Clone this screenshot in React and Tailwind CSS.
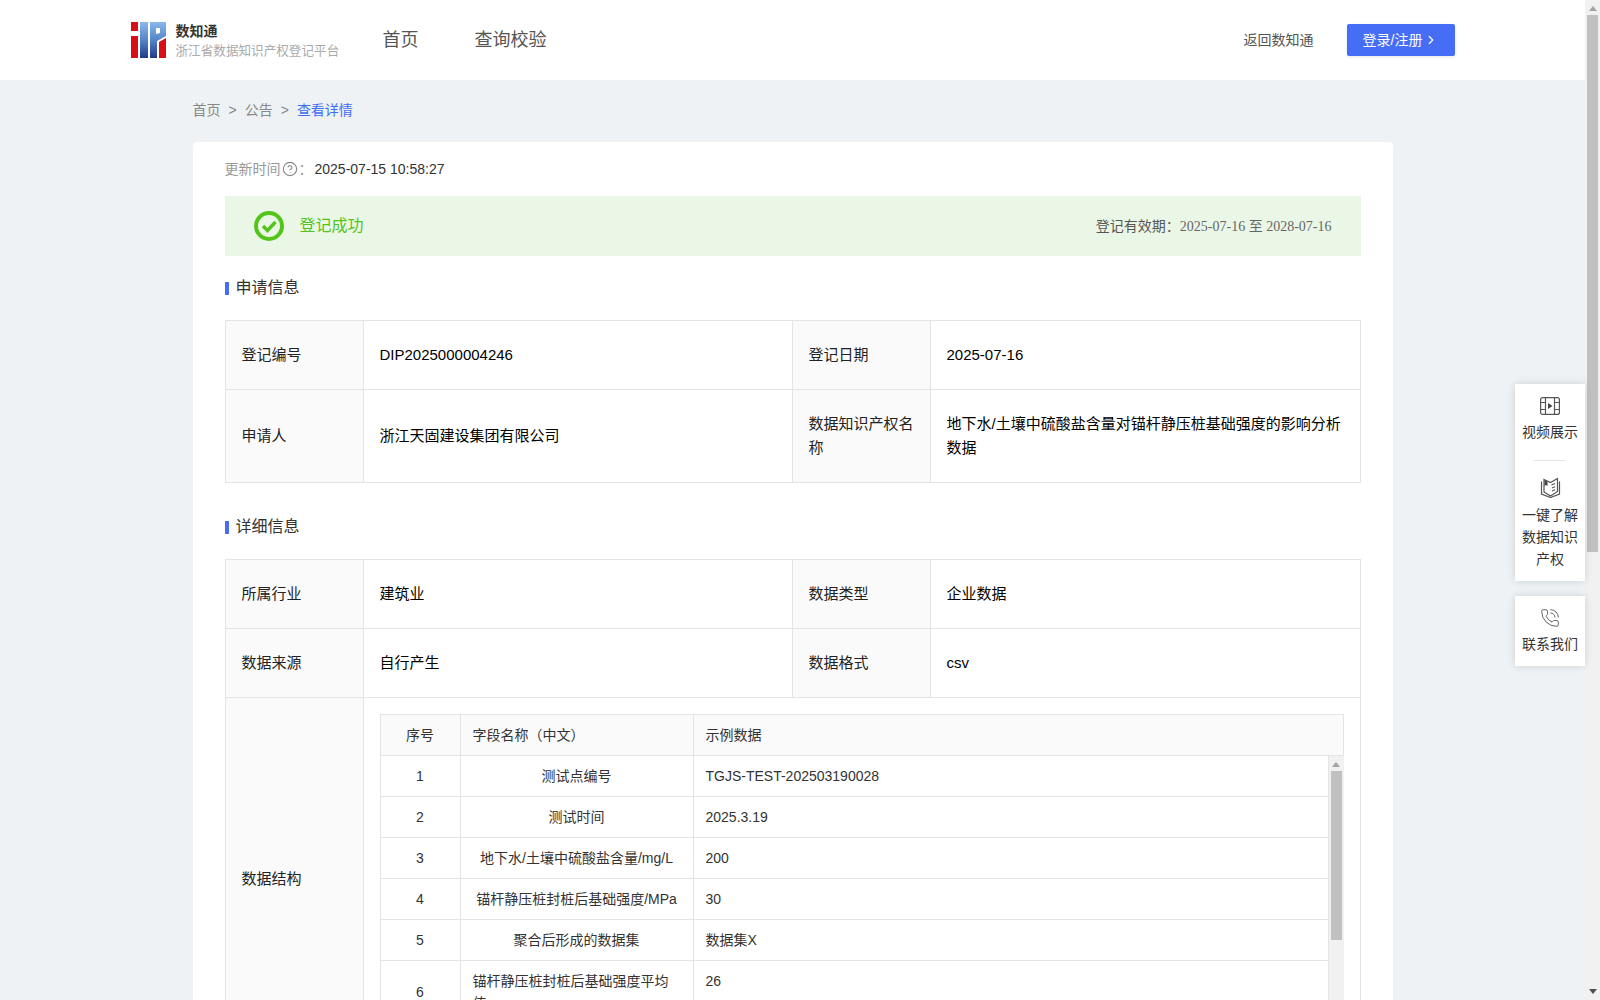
import { ChevronRight, CircleHelp, PhoneCall } from 'lucide-react'

const SANS = "font-['Liberation_Sans','Noto_Sans_CJK_SC',sans-serif]"

function Logo() {
  return (
    <svg width="35" height="36" viewBox="0 0 35 36" className="shrink-0">
      <defs>
        <linearGradient id="logoBlue" x1="0" y1="0" x2="0" y2="1">
          <stop offset="0" stopColor="#8ab8ea" />
          <stop offset="0.5" stopColor="#5585c8" />
          <stop offset="1" stopColor="#1f3a8a" />
        </linearGradient>
      </defs>
      <rect x="0" y="0" width="7" height="9" fill="#d80f16" />
      <rect x="0" y="14" width="7" height="22" fill="#d80f16" />
      <rect x="9" y="0" width="8" height="36" fill="url(#logoBlue)" />
      <path fill="url(#logoBlue)" fillRule="evenodd" d="M19 0h16v14l-9 5v17h-7zM25 6v6l4-1V6z" />
      <path fill="#d80f16" d="M35 16v20h-7V20z" />
    </svg>
  )
}

function FilmIcon() {
  return (
    <svg width="20" height="18" viewBox="0 0 20 18" fill="none" stroke="#555" strokeWidth="1.2">
      <rect x="0.6" y="0.6" width="18.8" height="16.8" rx="2" />
      <path d="M5.5 1v16M14.5 1v16M1 5.5h4.5M1 12.5h4.5M14.5 5.5H19M14.5 12.5H19" />
      <path d="M8 6l4.5 3L8 12z" fill="#444" stroke="none" />
    </svg>
  )
}

function BookIcon() {
  return (
    <svg width="21" height="21" viewBox="0 0 21 21" fill="none" stroke="#555" strokeWidth="1.2">
      <path d="M4 2.5l6.5 3 7-4v13l-7 4.5-6.5-4z" />
      <path d="M1.5 4.5v12.5l9 3.5 9-3.5V4.5" />
      <path d="M4.5 3l3 1.4v4.5l-1.5-1-1.5 1z" fill="#444" stroke="none" />
      <path d="M11.5 8l3.5-1.5M12 11l3-1.2M12 14l3-1.2" />
    </svg>
  )
}

function Heading({ children, className }) {
  return (
    <div className={`flex h-6 items-center gap-[7px] text-base text-[#333] ${className}`}>
      <span className="h-[13px] w-1 bg-[#456DF5]" />
      {children}
    </div>
  )
}

function Label({ children, className = '' }) {
  return <td className={`border border-[#e4e4e4] bg-[#fafafa] px-4 leading-6 ${className}`}>{children}</td>
}

function Value({ children }) {
  return <td className="border border-[#e4e4e4] px-4 leading-6 text-black">{children}</td>
}

function InfoTable({ children }) {
  return (
    <table className="w-[1136px] table-fixed border-collapse text-[15px] text-[#222]">
      <colgroup>
        <col className="w-[138px]" />
        <col className="w-[429px]" />
        <col className="w-[138px]" />
        <col />
      </colgroup>
      <tbody>{children}</tbody>
    </table>
  )
}

const FIELDS = [
  { no: 1, name: '测试点编号', sample: 'TGJS-TEST-202503190028' },
  { no: 2, name: '测试时间', sample: '2025.3.19' },
  { no: 3, name: '地下水/土壤中硫酸盐含量/mg/L', sample: '200' },
  { no: 4, name: '锚杆静压桩封桩后基础强度/MPa', sample: '30' },
  { no: 5, name: '聚合后形成的数据集', sample: '数据集X' },
  { no: 6, name: '锚杆静压桩封桩后基础强度平均值', sample: '26', wrap: true },
]

function FieldsTable() {
  return (
    <div className="w-[964px] text-sm text-[#333]">
      <div className="flex h-[42px] border border-[#e4e4e4] bg-[#fafafa] leading-[40px]">
        <div className="w-[80px] border-r border-[#e4e4e4] text-center">序号</div>
        <div className="w-[233px] border-r border-[#e4e4e4] px-3">字段名称（中文）</div>
        <div className="flex-1 px-3">示例数据</div>
      </div>
      <div className="flex h-[288px] overflow-hidden">
        <div className="w-[949px] shrink-0">
          {FIELDS.map((f) => (
            <div key={f.no} className="flex border-b border-l border-[#e4e4e4]">
              <div className="flex w-[80px] items-center justify-center border-r border-[#e4e4e4] py-[9px] leading-[22px]">{f.no}</div>
              <div className={`w-[233px] border-r border-[#e4e4e4] px-3 py-[9px] leading-[22px] ${f.wrap ? 'text-left' : 'text-center'}`}>{f.name}</div>
              <div className="flex-1 border-r border-[#e4e4e4] px-3 py-[9px] leading-[22px]">{f.sample}</div>
            </div>
          ))}
        </div>
        <div className="flex w-[15px] flex-col items-center bg-[#f1f1f1] pt-[6px]">
          <svg width="8" height="5" viewBox="0 0 8 5"><path d="M4 0l4 5H0z" fill="#a3a3a3" /></svg>
          <div className="mt-1 h-[169px] w-[11px] bg-[#c1c1c1]" />
        </div>
      </div>
    </div>
  )
}

export default function App() {
  return (
    <div className={`relative flex h-screen overflow-hidden bg-[#eef2f5] ${SANS}`}>
      <div className="min-w-0 flex-1">
        {/* 顶部导航 */}
        <header className="h-20 bg-white">
          <div className="mx-auto flex h-full w-[1324px] items-center">
            <Logo />
            <div className="ml-[10px] w-[164px] whitespace-nowrap">
              <div className="text-sm leading-[20px] font-bold text-[#333]">数知通</div>
              <div className="mt-px text-[12.6px] leading-[18px] text-[#aaa]">浙江省数据知识产权登记平台</div>
            </div>
            <nav className="ml-[43px] flex gap-[56px] text-lg text-[#555]">
              <span>首页</span>
              <span>查询校验</span>
            </nav>
            <span className="ml-auto text-sm text-[#555]">返回数知通</span>
            <button className="ml-[33px] flex h-8 w-[108px] items-center gap-[2px] rounded-[2px] bg-[#456DF5] pl-4 text-sm text-white shadow-[0_1px_3px_rgba(0,0,0,0.1)]">
              登录/注册
              <ChevronRight className="h-[14px] w-[14px]" />
            </button>
          </div>
        </header>

        <main className="mx-auto w-[1200px]">
          {/* 面包屑 */}
          <div className="mt-5 mb-[22px] flex h-5 items-center gap-2 text-sm text-[#888]">
            <span>首页</span>
            <span>&gt;</span>
            <span>公告</span>
            <span>&gt;</span>
            <span className="text-[#3F6DF5]">查看详情</span>
          </div>

          <div className="rounded bg-white px-8 pt-4">
            <div className="mb-4 flex h-[22px] items-center text-sm text-[#999]">
              更新时间
              <CircleHelp className="mx-px h-4 w-4 text-[#888]" strokeWidth={1.7} />
              <span className="w-[16px]">：</span>
              <span className="text-[#333]">2025-07-15 10:58:27</span>
            </div>

            {/* 登记状态 */}
            <div className="flex h-[60px] items-center bg-[#ebf7e6] pr-[29px] pl-[29px]">
              <svg width="30" height="30" viewBox="0 0 30 30" fill="none" stroke="#52c41a">
                <circle cx="15" cy="15" r="13" strokeWidth="4" />
                <path d="M9 15l4.5 4.5L21.5 11" strokeWidth="3.4" />
              </svg>
              <span className="ml-4 text-base text-[#52c41a]">登记成功</span>
              <span className="ml-auto text-sm text-[#555]">
                登记有效期：
                <span className="font-['Liberation_Serif','Noto_Sans_CJK_SC',serif] text-[#666]">2025-07-16 至 2028-07-16</span>
              </span>
            </div>

            <Heading className="mt-5 mb-5">申请信息</Heading>
            <InfoTable>
              <tr className="h-[69px]">
                <Label>登记编号</Label>
                <Value>DIP2025000004246</Value>
                <Label>登记日期</Label>
                <Value>2025-07-16</Value>
              </tr>
              <tr className="h-[93px]">
                <Label>申请人</Label>
                <Value>浙江天固建设集团有限公司</Value>
                <Label>数据知识产权名称</Label>
                <Value>地下水/土壤中硫酸盐含量对锚杆静压桩基础强度的影响分析数据</Value>
              </tr>
            </InfoTable>

            <Heading className="mt-8 mb-5">详细信息</Heading>
            <InfoTable>
              <tr className="h-[69px]">
                <Label>所属行业</Label>
                <Value>建筑业</Value>
                <Label>数据类型</Label>
                <Value>企业数据</Value>
              </tr>
              <tr className="h-[69px]">
                <Label>数据来源</Label>
                <Value>自行产生</Value>
                <Label>数据格式</Label>
                <Value>csv</Value>
              </tr>
              <tr>
                <Label>数据结构</Label>
                <td colSpan={3} className="border border-[#e4e4e4] p-4">
                  <FieldsTable />
                </td>
              </tr>
            </InfoTable>
          </div>
        </main>
      </div>

      {/* 页面滚动条 */}
      <div className="flex w-[15px] shrink-0 flex-col items-center bg-[#f1f1f1] pt-[6px] pb-[6px]">
        <svg width="8" height="5" viewBox="0 0 8 5"><path d="M4 0l4 5H0z" fill="#a3a3a3" /></svg>
        <div className="mt-1 h-[537px] w-[11px] bg-[#c1c1c1]" />
        <svg className="mt-auto" width="8" height="5" viewBox="0 0 8 5"><path d="M4 5L0 0h8z" fill="#505050" /></svg>
      </div>

      {/* 右侧悬浮栏 */}
      <div className="absolute top-[384px] right-[15px] w-[70px] text-center text-sm leading-[22px] text-[#333]">
        <div className="flex h-[197px] flex-col items-center bg-white pt-[13px] shadow-[0_0_8px_rgba(0,0,0,0.14)]">
          <FilmIcon />
          <div className="mt-[6px]">视频展示</div>
          <div className="mt-[17px] mb-4 h-px w-8 bg-[#e4e4e4]" />
          <BookIcon />
          <div className="mt-[6px] w-[60px]">一键了解数据知识产权</div>
        </div>
        <div className="mt-[15px] flex h-[70px] flex-col items-center bg-white pt-[12px] shadow-[0_0_8px_rgba(0,0,0,0.14)]">
          <PhoneCall className="h-5 w-5 text-[#555]" strokeWidth={1.1} />
          <div className="mt-[5px]">联系我们</div>
        </div>
      </div>
    </div>
  )
}
